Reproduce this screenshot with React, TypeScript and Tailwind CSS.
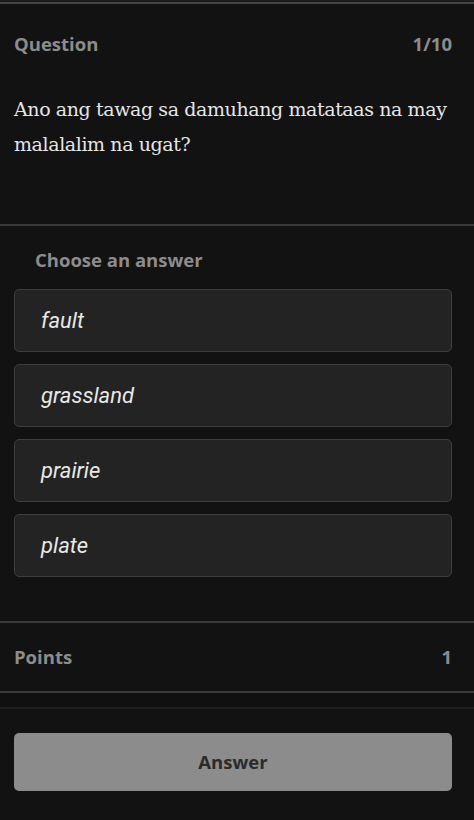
import React from 'react';

const answers = ['fault', 'grassland', 'prairie', 'plate'];

const label = "font-['Open_Sans',sans-serif] font-bold text-[18.5px] leading-[24px] text-[#8c8c8c]";

export default function App() {
  return (
    <div className="w-[474px] h-[820px] bg-[#121212] overflow-hidden">
      <div className="h-[2px] bg-[#1a1a1a]" />
      <div className="h-[2px] bg-[#444]" />

      {/* question header */}
      <div className="flex justify-between items-center pl-[14px] pr-[22px] pt-[28px]">
        <span className={label}>Question</span>
        <span className={label}>1/10</span>
      </div>

      <p className="pl-[14px] pr-[22px] pt-[36px] font-['DejaVu_Serif',serif] text-[19px] leading-[35px] text-[#e6e6e6] h-[168px] tracking-[-0.4px]">
        Ano ang tawag sa damuhang matataas na may malalalim na ugat?
      </p>

      <div className="h-[2px] bg-[#3a3a3a]" />

      <div className={`${label} pl-[35px] pt-[22px]`}>Choose an answer</div>

      <div className="flex flex-col gap-[12px] pl-[14px] pr-[22px] pt-[17px]">
        {answers.map((a) => (
          <button
            key={a}
            className="h-[63px] w-full text-left pl-[26px] bg-[#232323] border border-[#3d3d3d] rounded-[5px] font-['Roboto',sans-serif] italic text-[22px] text-[#e8e8e8]"
          >
            {a}
          </button>
        ))}
      </div>

      <div className="mt-[44px] h-[2px] bg-[#3a3a3a]" />
      <div className="flex justify-between items-center pl-[14px] pr-[22px] h-[68px]">
        <span className={label}>Points</span>
        <span className={label}>1</span>
      </div>
      <div className="h-[2px] bg-[#3a3a3a]" />
      <div className="h-[14px] bg-[#101010]" />
      <div className="h-[2px] bg-[#1e1e1e]" />

      <div className="pl-[14px] pr-[22px] pt-[24px]">
        <button className="w-full h-[58px] rounded-[5px] bg-[#8c8c8c] font-['Open_Sans',sans-serif] font-bold text-[18.5px] text-[#2b2b2b]">
          Answer
        </button>
      </div>
    </div>
  );
}
